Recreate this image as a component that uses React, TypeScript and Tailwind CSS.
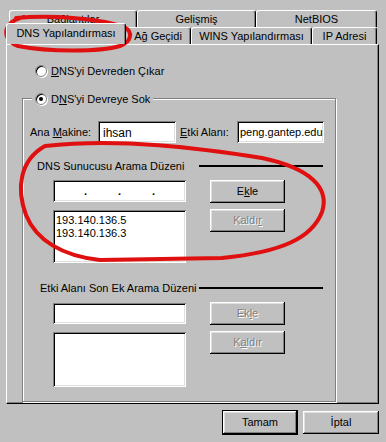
import React from 'react';

const raised =
  'shadow-[inset_-1px_-1px_0_#000,inset_1px_1px_0_#fff,inset_-2px_-2px_0_#808080,inset_2px_2px_0_#dfdfdf]';
const sunken =
  'shadow-[inset_1px_1px_0_#808080,inset_-1px_-1px_0_#fff,inset_2px_2px_0_#000,inset_-2px_-2px_0_#dfdfdf]';

const U: React.FC<{ children: React.ReactNode }> = ({ children }) => <span className="underline underline-offset-[1px]">{children}</span>;

const Radio: React.FC<{ checked?: boolean }> = ({ checked }) => (
  <div className="w-[12px] h-[12px] rounded-full bg-white border border-[#808080] shadow-[inset_1px_1px_0_#000,1px_1px_0_#fff] flex items-center justify-center">
    {checked && <div className="w-[4px] h-[4px] rounded-full bg-black" />}
  </div>
);

const Button: React.FC<{ children: React.ReactNode; disabled?: boolean; def?: boolean; w?: string }> = ({ children, disabled, def, w = 'w-[75px]' }) => (
  <div
    className={`${w} h-[23px] flex items-center justify-center bg-[#c0c0c0] ${raised} ${def ? 'outline outline-1 outline-black' : ''} ${
      disabled ? 'text-[#808080] [text-shadow:1px_1px_0_#fff]' : 'text-black'
    }`}
  >
    {children}
  </div>
);

const Tab: React.FC<{ label: string; w: string; selected?: boolean }> = ({ label, w, selected }) => (
  <div
    className={`${w} flex items-center justify-center rounded-t-[3px] border-l border-t border-white bg-[#c0c0c0] shadow-[inset_-1px_0_0_#808080] border-r border-r-black ${
      selected ? 'relative z-10 -ml-[2px] -mr-[1px] -mt-[2px] h-[21px] pb-[1px]' : 'h-[17px]'
    }`}
  >
    {label}
  </div>
);

const SectionHeader: React.FC<{ title: string; pl: string }> = ({ title, pl }) => (
  <div className={`flex items-center h-[14px] ${pl}`}>
    <span className="whitespace-nowrap">{title}</span>
    <div className="flex-1" />
    <div className="w-[124px] h-[2px] bg-black mr-[12px]" />
  </div>
);

export default function App() {
  return (
    <div
      className="relative w-[386px] h-[442px] bg-[#c0c0c0] overflow-hidden text-[11px] leading-none text-black"
      style={{ fontFamily: '"Liberation Sans", Arial, sans-serif' }}
    >
      {/* tabs */}
      <div className="flex ml-[9px] mt-[10px] h-[17px]">
        <Tab label="Bağlantılar" w="w-[128px]" />
        <Tab label="Gelişmiş" w="w-[119px]" />
        <Tab label="NetBIOS" w="w-[121px]" />
      </div>
      <div className="flex items-end ml-[8px] h-[17px]">
        <Tab label="DNS Yapılandırması" w="w-[120px]" selected />
        <Tab label="Ağ Geçidi" w="w-[66px]" />
        <Tab label="WINS Yapılandırması" w="w-[121px]" />
        <Tab label="IP Adresi" w="w-[65px]" />
      </div>

      {/* panel */}
      <div className="ml-[6px] w-[373px] h-[360px] bg-[#c0c0c0] border-l border-t border-white border-r border-b border-r-black border-b-black shadow-[inset_-1px_-1px_0_#808080] pl-[15px]">
        <div className="flex items-center gap-[4px] mt-[19px] ml-[13px] h-[14px]">
          <Radio />
          <span>
            <U>D</U>NS'yi Devreden Çıkar
          </span>
        </div>

        <div className="relative mt-[20px] w-[314px] h-[304px] border border-[#808080] shadow-[inset_1px_1px_0_#fff,1px_1px_0_#fff]">
          <div className="absolute -top-[7px] left-[9px] flex items-center gap-[4px] bg-[#c0c0c0] px-[3px] h-[14px]">
            <Radio checked />
            <span>
              D<U>N</U>S'yi Devreye Sok
            </span>
          </div>

          <div className="flex items-center mt-[22px] pl-[7px] h-[22px]">
            <span className="w-[68px]">
              Ana <U>M</U>akine:
            </span>
            <div className={`w-[78px] h-[22px] bg-white ${sunken} flex items-center pl-[5px] pt-[2px] text-[12px]`}>ihsan</div>
            <span className="w-[57px] ml-[4px]">
              <U>E</U>tki Alanı:
            </span>
            <div className={`w-[87px] h-[22px] bg-white ${sunken} flex items-center pl-[3px] pt-[1px] text-[11px] overflow-hidden whitespace-nowrap`}>
              peng.gantep.edu
            </div>
          </div>

          <div className="mt-[16px]">
            <SectionHeader title="DNS Sunucusu Arama Düzeni" pl="pl-[14px]" />
          </div>

          <div className="flex mt-[7px] pl-[30px] gap-[24px]">
            <div className="flex flex-col w-[133px]">
              <div className={`h-[22px] bg-white ${sunken} flex items-end justify-evenly pb-[5px] font-bold`}>
                <span>.</span>
                <span>.</span>
                <span>.</span>
              </div>
              <div className={`mt-[8px] h-[53px] bg-white ${sunken} pt-[4px] pl-[3px] leading-[13px]`}>
                <div>193.140.136.5</div>
                <div>193.140.136.3</div>
              </div>
            </div>
            <div className="flex flex-col gap-[6px]">
              <Button>
                E<U>k</U>le
              </Button>
              <Button disabled>
                Kaldı<U>r</U>
              </Button>
            </div>
          </div>

          <div className="mt-[18px]">
            <SectionHeader title="Etki Alanı Son Ek Arama Düzeni" pl="pl-[17px]" />
          </div>

          <div className="flex mt-[7px] pl-[30px] gap-[24px]">
            <div className="flex flex-col w-[133px]">
              <div className={`mt-[1px] h-[21px] bg-white ${sunken}`} />
              <div className={`mt-[8px] h-[55px] bg-white ${sunken}`} />
            </div>
            <div className="flex flex-col gap-[6px]">
              <Button disabled>
                Ek<U>l</U>e
              </Button>
              <Button disabled>
                K<U>a</U>ldır
              </Button>
            </div>
          </div>
        </div>
      </div>

      {/* dialog buttons */}
      <div className="flex justify-end gap-[6px] mt-[7px] mr-[7px]">
        <Button def w="w-[74px]">Tamam</Button>
        <Button w="w-[76px]">İptal</Button>
      </div>

      {/* red hand-drawn annotations */}
      <svg className="absolute inset-0 pointer-events-none" width="386" height="442" viewBox="0 0 386 442">
        <g fill="none" stroke="#e01010" strokeWidth="4" strokeLinecap="round" strokeLinejoin="round">
          <path d="M 16 18 C 50 15, 98 18, 124 27 C 134 32, 131 42, 120 46 C 100 52, 48 52, 18 46 C 5 42, 4 31, 9 25 C 13 20, 19 18, 24 17" />
          <path d="M 45 146 C 120 138, 200 148, 262 158 C 310 168, 330 188, 322 212 C 312 238, 282 252, 222 258 L 100 260 C 62 256, 36 240, 26 215 C 16 188, 20 160, 45 146" />
        </g>
      </svg>
    </div>
  );
}
